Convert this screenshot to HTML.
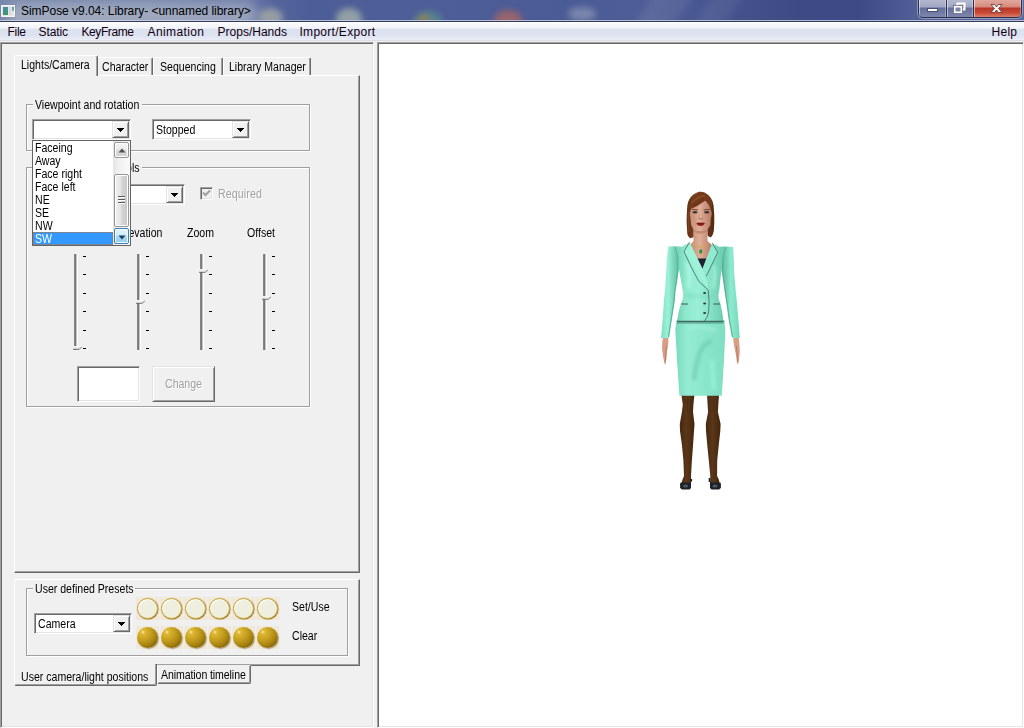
<!DOCTYPE html>
<html>
<head>
<meta charset="utf-8">
<title>SimPose v9.04: Library- &lt;unnamed library&gt;</title>
<style>
html,body{margin:0;padding:0;}
body{width:1024px;height:728px;position:relative;overflow:hidden;background:#f0f0f0;font-family:"Liberation Sans",sans-serif;font-size:12px;color:#000;}
.abs{position:absolute;}
#titlebar{left:0;top:0;width:1024px;height:22px;overflow:hidden;
 background:linear-gradient(90deg,#7686ac 0px,#7484ab 150px,#6a7aa8 245px,#55659c 275px,#4d5d97 310px,#4e5e98 420px,#4b5b95 560px,#4e5d96 650px,#46548e 720px,#3d4a84 800px,#3e4a85 860px,#525e96 915px,#5a669c 1024px);}
#titlebar .blob{position:absolute;border-radius:50%;filter:blur(3px);}
#titletext{left:21px;top:4px;font-size:12px;white-space:nowrap;color:#000;letter-spacing:-0.04px;}
#menubar{left:0;top:22px;width:1024px;height:19px;background:linear-gradient(#fdfdfe 0,#f1f3f9 6px,#dde2f0 7.500px,#dde2f0 13px,#e6eaf4 17px,#eef0f7 18px,#c9cdd9 19px);}
.mi{position:absolute;top:25px;font-size:12px;white-space:nowrap;color:#100010;letter-spacing:0.22px;}
.t{position:absolute;white-space:nowrap;font-size:12px;line-height:14px;transform:scaleX(.88);transform-origin:0 0;}
.gray{color:#a0a0a0;text-shadow:1px 1px 0 #fff;}
.gb{position:absolute;border:1px solid #a0a0a0;box-shadow:1px 1px 0 #fff, inset 1px 1px 0 #fff;box-sizing:border-box;}
.gbl{position:absolute;background:#f0f0f0;height:14px;}
.sunk{position:absolute;box-sizing:border-box;background:#fff;border:1px solid;border-color:#a0a0a0 #fff #fff #a0a0a0;box-shadow:inset 1px 1px 0 #696969, inset -1px -1px 0 #e3e3e3;}
.btn{position:absolute;box-sizing:border-box;background:#f0f0f0;border:1px solid;border-color:#e3e3e3 #696969 #696969 #e3e3e3;box-shadow:inset 1px 1px 0 #fff, inset -1px -1px 0 #a0a0a0;}
.arr{position:absolute;width:0;height:0;border-left:4px solid transparent;border-right:4px solid transparent;border-top:4px solid #000;}
.track{position:absolute;width:3px;height:96px;background:linear-gradient(90deg,#a0a0a0 0,#696969 1px,#8a8a8a 2px,#fff 3px);box-shadow:1px 0 0 #fff;}
.tick{position:absolute;width:3px;height:1px;background:#000;}
.tabu{box-sizing:border-box;border:1px solid;border-color:#fff #696969 transparent #fff;border-bottom:none;border-radius:2px 2px 0 0;box-shadow:inset -1px 0 0 #a0a0a0;}
.thumb{position:absolute;width:9px;height:4px;}
</style>
</head>
<body>

<!-- ===== title bar ===== -->
<div id="titlebar" class="abs">
  <div class="blob" style="left:6px;top:3px;width:252px;height:24px;background:#e0e0dc;opacity:.4;filter:blur(6px);border-radius:12px"></div>
  <div class="blob" style="left:259px;top:8px;width:24px;height:20px;background:#c8c8a8;opacity:.55"></div>
  <div class="blob" style="left:336px;top:8px;width:26px;height:22px;background:#c0ccb0;opacity:.6"></div>
  <div class="blob" style="left:414px;top:11px;width:28px;height:20px;background:#5a9a8a;opacity:.65"></div>
  <div class="blob" style="left:418px;top:15px;width:12px;height:10px;background:#c07830;opacity:.6"></div>
  <div class="blob" style="left:494px;top:10px;width:28px;height:22px;background:#b8685c;opacity:.7"></div>
  <div class="blob" style="left:568px;top:7px;width:28px;height:14px;background:#98a2bc;opacity:.6"></div>
  <div class="abs" style="left:640px;top:-20px;width:40px;height:70px;background:#fff;opacity:.07;transform:skewX(-35deg);filter:blur(4px)"></div>
  <div class="abs" style="left:700px;top:-20px;width:30px;height:70px;background:#fff;opacity:.06;transform:skewX(-35deg);filter:blur(4px)"></div>
  <div class="abs" style="left:0;top:20px;width:1024px;height:1px;background:#d4daea;opacity:.75"></div>
</div>
<div class="abs" style="left:0;top:21px;width:1024px;height:1px;background:#343c5c;"></div>
<!-- app icon -->
<div class="abs" style="left:1px;top:5px;width:14px;height:12px;background:#e4e6e6;border:1px solid #f4f6f8;box-sizing:border-box;box-shadow:0 0 1px #667;">
  <div class="abs" style="left:1px;top:1px;width:5px;height:8px;background:linear-gradient(#4a8aa8,#3c9a6c);"></div>
  <div class="abs" style="left:7px;top:1px;width:2px;height:8px;background:#d8dada;"></div>
  <div class="abs" style="left:10px;top:1px;width:2px;height:4px;background:linear-gradient(#5a96c8,#7ab888);"></div>
</div>
<div id="titletext" class="abs">SimPose v9.04: Library- &lt;unnamed library&gt;</div>

<!-- window buttons -->
<div class="abs" style="left:918px;top:-2px;width:104px;height:20px;border:1px solid #2a3050;border-radius:0 0 5px 5px;box-sizing:border-box;overflow:hidden;box-shadow:0 0 0 1px rgba(255,255,255,.35);">
  <div class="abs" style="left:0;top:0;width:27px;height:18px;background:linear-gradient(#b6bbd0 0,#a0a6c2 8px,#666f9b 9px,#7d87ae 18px);box-shadow:inset 1px 0 0 rgba(255,255,255,.5), inset -1px 0 0 rgba(255,255,255,.3);"></div>
  <div class="abs" style="left:27px;top:0;width:1px;height:18px;background:#2a3050;"></div>
  <div class="abs" style="left:28px;top:0;width:26px;height:18px;background:linear-gradient(#b6bbd0 0,#a0a6c2 8px,#666f9b 9px,#7d87ae 18px);box-shadow:inset 1px 0 0 rgba(255,255,255,.5), inset -1px 0 0 rgba(255,255,255,.3);"></div>
  <div class="abs" style="left:54px;top:0;width:1px;height:18px;background:#2a3050;"></div>
  <div class="abs" style="left:55px;top:0;width:47px;height:18px;background:linear-gradient(#e2aca2 0,#d68a7a 8px,#b8362a 9px,#c84a36 14px,#d8806a 18px);box-shadow:inset 1px 0 0 rgba(255,255,255,.5), inset -1px 0 0 rgba(255,255,255,.3);"></div>
</div>
<svg class="abs" style="left:918px;top:0" width="104" height="18" viewBox="0 0 104 18">
  <rect x="9.5" y="8.500" width="10" height="3" fill="#fff" stroke="#4a506a" stroke-width="1"/>
  <rect x="39.500" y="3.500" width="7" height="6" fill="#9097b6" stroke="#fff" stroke-width="2"/>
  <rect x="36.500" y="6.500" width="7" height="6" fill="#7c86ad" stroke="#fff" stroke-width="2"/>
  <rect x="35.500" y="5.500" width="9" height="8" fill="none" stroke="#4a506a" stroke-width=".6"/>
  <path d="M73 4.500 L76.500 4.500 L78.500 7 L80.500 4.500 L84 4.500 L80.500 8.500 L84 12.500 L80.500 12.500 L78.500 10 L76.500 12.500 L73 12.500 L76.500 8.500 Z" fill="#fff" stroke="#5a3030" stroke-width=".8"/>
</svg>

<!-- ===== menu bar ===== -->
<div id="menubar" class="abs"></div>
<div class="mi" style="left:7.5px;letter-spacing:-0.28px">File</div>
<div class="mi" style="left:38.5px;letter-spacing:-0.1px">Static</div>
<div class="mi" style="left:81.5px;letter-spacing:-0.41px">KeyFrame</div>
<div class="mi" style="left:147.5px;letter-spacing:0.39px">Animation</div>
<div class="mi" style="left:217.5px;letter-spacing:0.01px">Props/Hands</div>
<div class="mi" style="left:299.5px;letter-spacing:0.29px">Import/Export</div>
<div class="mi" style="left:991.5px;letter-spacing:0.27px">Help</div>

<!-- ===== frames ===== -->
<div class="abs" style="left:0;top:41px;width:1024px;height:1px;background:#f0f0f0;"></div>
<!-- left panel -->
<div class="abs" id="leftpanel" style="left:0;top:42px;width:374px;height:686px;box-sizing:border-box;background:#f0f0f0;border:1px solid;border-color:#a0a0a0 #fff #fff #a0a0a0;box-shadow:inset 1px 1px 0 #696969, inset -1px -1px 0 #e3e3e3;"></div>
<!-- ===== upper tab control ===== -->
<!-- tab page -->
<div class="abs" style="left:14px;top:75px;width:346px;height:498px;box-sizing:border-box;border:1px solid;border-color:#fff #696969 #696969 #fff;box-shadow:inset -1px -1px 0 #a0a0a0;"></div>
<!-- unselected tabs -->
<div class="abs tabu" style="left:97px;top:57px;width:56px;height:18px;"></div>
<div class="abs tabu" style="left:153px;top:57px;width:70px;height:18px;"></div>
<div class="abs tabu" style="left:223px;top:57px;width:88px;height:18px;"></div>
<!-- selected tab -->
<div class="abs" style="left:14px;top:55px;width:84px;height:21px;box-sizing:border-box;background:#f0f0f0;border:1px solid;border-color:#fff #696969 #f0f0f0 #fff;border-bottom:none;border-radius:2px 2px 0 0;box-shadow:inset -1px 0 0 #a0a0a0;"></div>
<div class="t" style="left:21px;top:58px;">Lights/Camera</div>
<div class="t" style="left:102px;top:60px;">Character</div>
<div class="t" style="left:160px;top:60px;">Sequencing</div>
<div class="t" style="left:229px;top:60px;">Library Manager</div>

<!-- group: Viewpoint and rotation -->
<div class="gb" style="left:26px;top:104px;width:284px;height:47px;"></div>
<div class="gbl" style="left:33px;top:98px;width:109px;"></div>
<div class="t" style="left:35px;top:98px;">Viewpoint and rotation</div>

<!-- group: Lights controls (partially hidden) -->
<div class="gb" style="left:26px;top:167px;width:284px;height:240px;"></div>
<div class="gbl" style="left:33px;top:161px;width:109px;"></div>
<div class="t" style="left:19px;top:161px;width:137px;text-align:right;">Lighting controls</div>

<!-- combo 2 (Stopped) -->
<div class="sunk" style="left:152px;top:119px;width:99px;height:21px;"></div>
<div class="btn" style="left:232px;top:121px;width:17px;height:17px;"></div>
<svg class="abs" style="left:237px;top:128px" width="7" height="4" viewBox="0 0 7 4" shape-rendering="crispEdges"><path d="M0 0h7v1h-7z M1 1h5v1h-5z M2 2h3v1h-3z M3 3h1v1h-1z" fill="#000"/></svg>
<div class="t" style="left:156px;top:123px;">Stopped</div>

<!-- lights combo (partially hidden) -->
<div class="sunk" style="left:86px;top:184px;width:99px;height:21px;"></div>
<div class="btn" style="left:166px;top:186px;width:17px;height:17px;"></div>
<svg class="abs" style="left:171px;top:193px" width="7" height="4" viewBox="0 0 7 4" shape-rendering="crispEdges"><path d="M0 0h7v1h-7z M1 1h5v1h-5z M2 2h3v1h-3z M3 3h1v1h-1z" fill="#000"/></svg>

<!-- Required checkbox -->
<div class="sunk" style="left:200px;top:187px;width:13px;height:13px;background:#f0f0f0;"></div>
<svg class="abs" style="left:202px;top:189px" width="9" height="9" viewBox="0 0 9 9"><path d="M1 3.500 L3.500 6 L8 1.500" fill="none" stroke="#a0a0a0" stroke-width="2"/></svg>
<div class="t gray" style="left:218px;top:187px;letter-spacing:.15px">Required</div>

<!-- slider labels -->
<div class="t" style="left:62px;top:226px;">Rotation</div>
<div class="t" style="left:118.500px;top:226px;">Elevation</div>
<div class="t" style="left:187px;top:226px;">Zoom</div>
<div class="t" style="left:247px;top:226px;">Offset</div>
<div class="track" style="left:74px;top:254px;"></div>
<div class="tick" style="left:83px;top:256px;"></div>
<div class="tick" style="left:83px;top:274px;"></div>
<div class="tick" style="left:83px;top:293px;"></div>
<div class="tick" style="left:83px;top:311px;"></div>
<div class="tick" style="left:83px;top:330px;"></div>
<div class="tick" style="left:83px;top:348px;"></div>
<svg class="thumb" style="left:73px;top:346px" width="10" height="4" viewBox="0 0 10 4"><path d="M0 0 H10 L7 3 H0 Z" fill="#e8e8e8"/><path d="M0 0.500 H9" stroke="#fff" stroke-width="1"/><path d="M0 3.500 H7 L10 0.500" fill="none" stroke="#696969" stroke-width="1"/></svg>
<div class="track" style="left:137px;top:254px;"></div>
<div class="tick" style="left:146px;top:256px;"></div>
<div class="tick" style="left:146px;top:274px;"></div>
<div class="tick" style="left:146px;top:293px;"></div>
<div class="tick" style="left:146px;top:311px;"></div>
<div class="tick" style="left:146px;top:330px;"></div>
<div class="tick" style="left:146px;top:348px;"></div>
<svg class="thumb" style="left:136px;top:300px" width="10" height="4" viewBox="0 0 10 4"><path d="M0 0 H10 L7 3 H0 Z" fill="#e8e8e8"/><path d="M0 0.500 H9" stroke="#fff" stroke-width="1"/><path d="M0 3.500 H7 L10 0.500" fill="none" stroke="#696969" stroke-width="1"/></svg>
<div class="track" style="left:200px;top:254px;"></div>
<div class="tick" style="left:209px;top:256px;"></div>
<div class="tick" style="left:209px;top:274px;"></div>
<div class="tick" style="left:209px;top:293px;"></div>
<div class="tick" style="left:209px;top:311px;"></div>
<div class="tick" style="left:209px;top:330px;"></div>
<div class="tick" style="left:209px;top:348px;"></div>
<svg class="thumb" style="left:199px;top:269px" width="10" height="4" viewBox="0 0 10 4"><path d="M0 0 H10 L7 3 H0 Z" fill="#e8e8e8"/><path d="M0 0.500 H9" stroke="#fff" stroke-width="1"/><path d="M0 3.500 H7 L10 0.500" fill="none" stroke="#696969" stroke-width="1"/></svg>
<div class="track" style="left:263px;top:254px;"></div>
<div class="tick" style="left:272px;top:256px;"></div>
<div class="tick" style="left:272px;top:274px;"></div>
<div class="tick" style="left:272px;top:293px;"></div>
<div class="tick" style="left:272px;top:311px;"></div>
<div class="tick" style="left:272px;top:330px;"></div>
<div class="tick" style="left:272px;top:348px;"></div>
<svg class="thumb" style="left:262px;top:296px" width="10" height="4" viewBox="0 0 10 4"><path d="M0 0 H10 L7 3 H0 Z" fill="#e8e8e8"/><path d="M0 0.500 H9" stroke="#fff" stroke-width="1"/><path d="M0 3.500 H7 L10 0.500" fill="none" stroke="#696969" stroke-width="1"/></svg>

<!-- edit + Change button -->
<div class="sunk" style="left:77px;top:366px;width:63px;height:36px;"></div>
<div class="btn" style="left:152px;top:366px;width:63px;height:36px;"></div>
<div class="t gray" style="left:165px;top:377px;">Change</div>

<!-- combo 1 (open) -->
<div class="sunk" style="left:32px;top:119px;width:99px;height:21px;"></div>
<div class="btn" style="left:112px;top:121px;width:17px;height:17px;"></div>
<svg class="abs" style="left:117px;top:128px" width="7" height="4" viewBox="0 0 7 4" shape-rendering="crispEdges"><path d="M0 0h7v1h-7z M1 1h5v1h-5z M2 2h3v1h-3z M3 3h1v1h-1z" fill="#000"/></svg>
<!-- dropdown list -->
<div class="abs" style="left:32px;top:140px;width:99px;height:106px;box-sizing:border-box;background:#fff;border:1px solid #646464;"></div>
<div class="t li" style="left:35px;top:141px;">Faceing</div>
<div class="t li" style="left:35px;top:154px;">Away</div>
<div class="t li" style="left:35px;top:167px;">Face right</div>
<div class="t li" style="left:35px;top:180px;">Face left</div>
<div class="t li" style="left:35px;top:193px;">NE</div>
<div class="t li" style="left:35px;top:206px;">SE</div>
<div class="t li" style="left:35px;top:219px;">NW</div>
<div class="abs" style="left:33px;top:232px;width:80px;height:13px;box-sizing:border-box;background:#3399ff;border:1px dotted #c07030;"></div>
<div class="t li" style="left:35px;top:232px;color:#fff;">SW</div>
<!-- scrollbar -->
<div class="abs" style="left:113px;top:141px;width:17px;height:104px;background:linear-gradient(90deg,#e4e4e4,#f0f0f0 30%,#fafafa);"></div>
<div class="abs" style="left:114px;top:142px;width:15px;height:16px;box-sizing:border-box;border:1px solid #979797;border-radius:2px;background:linear-gradient(#f6f6f6,#ececec 45%,#dcdcdc 50%,#cfcfcf);box-shadow:inset 0 0 0 1px #fff;"></div>
<svg class="abs" style="left:118px;top:148px" width="8" height="5" viewBox="0 0 8 5"><path d="M0.500 4.500 L4 0.500 L7.500 4.500 Z" fill="#505050"/></svg>
<div class="abs" style="left:114px;top:174px;width:15px;height:53px;box-sizing:border-box;border:1px solid #979797;border-radius:2px;background:linear-gradient(90deg,#f3f3f3,#e2e2e2 45%,#d4d4d4 55%,#c6c6c6);box-shadow:inset 0 0 0 1px #fff;"></div>
<div class="abs" style="left:118px;top:196px;width:7px;height:1px;background:#5a5a5a;box-shadow:0 1px 0 #fff,0 3px 0 #5a5a5a,0 4px 0 #fff,0 6px 0 #5a5a5a,0 7px 0 #fff;"></div>
<div class="abs" style="left:114px;top:228px;width:15px;height:16px;box-sizing:border-box;border:1px solid #3c7fb1;border-radius:2px;background:linear-gradient(#e3f4fc,#d0ecfa 45%,#a8d9f4 50%,#94cdf0);box-shadow:inset 0 0 0 1px #f4fbfe;"></div>
<svg class="abs" style="left:118px;top:235px" width="8" height="5" viewBox="0 0 8 5"><path d="M0.500 0.500 H7.500 L4 4.500 Z" fill="#1c3f60"/></svg>

<!-- ===== lower frame ===== -->
<div class="abs" style="left:14px;top:579px;width:346px;height:87px;box-sizing:border-box;border:1px solid;border-color:#fff #696969 #696969 #fff;box-shadow:inset -1px -1px 0 #a0a0a0;"></div>
<div class="gb" style="left:26px;top:588px;width:322px;height:68px;"></div>
<div class="gbl" style="left:33px;top:582px;width:102px;"></div>
<div class="t" style="left:35px;top:582px;">User defined Presets</div>
<div class="sunk" style="left:34px;top:613px;width:98px;height:21px;"></div>
<div class="btn" style="left:113px;top:615px;width:17px;height:17px;"></div>
<svg class="abs" style="left:118px;top:622px" width="7" height="4" viewBox="0 0 7 4" shape-rendering="crispEdges"><path d="M0 0h7v1h-7z M1 1h5v1h-5z M2 2h3v1h-3z M3 3h1v1h-1z" fill="#000"/></svg>
<div class="t" style="left:38px;top:617px;">Camera</div>
<div class="t" style="left:292px;top:600px;">Set/Use</div>
<div class="t" style="left:292px;top:629px;">Clear</div>

<div class="abs" style="left:136px;top:597px;width:24px;height:23px;background:#f0e9d9;box-shadow:inset -1px 0 0 #f4efe4;"></div>
<div class="abs" style="left:137px;top:597.500px;width:21px;height:21px;box-sizing:border-box;border-radius:50%;background:#efefdf;border:1px solid #cfa638;box-shadow:inset 1px 1px 0 #fff, 0.500px 0.500px 1px #8a6a10;"></div>
<div class="abs" style="left:136px;top:626px;width:24px;height:23px;background:#f0e9d9;box-shadow:inset -1px 0 0 #f4efe4;"></div>
<div class="abs" style="left:137px;top:626.500px;width:21px;height:21px;border-radius:50%;background:radial-gradient(circle at 28% 24%,#f6e090 0,#dcb432 12%,#c9a222 34%,#ad8812 58%,#7a5a06 88%,#9a7a18 100%);box-shadow:1px 1px 1px rgba(120,90,20,.5);"></div>
<div class="abs" style="left:160px;top:597px;width:24px;height:23px;background:#f0e9d9;box-shadow:inset -1px 0 0 #f4efe4;"></div>
<div class="abs" style="left:161px;top:597.500px;width:21px;height:21px;box-sizing:border-box;border-radius:50%;background:#efefdf;border:1px solid #cfa638;box-shadow:inset 1px 1px 0 #fff, 0.500px 0.500px 1px #8a6a10;"></div>
<div class="abs" style="left:160px;top:626px;width:24px;height:23px;background:#f0e9d9;box-shadow:inset -1px 0 0 #f4efe4;"></div>
<div class="abs" style="left:161px;top:626.500px;width:21px;height:21px;border-radius:50%;background:radial-gradient(circle at 28% 24%,#f6e090 0,#dcb432 12%,#c9a222 34%,#ad8812 58%,#7a5a06 88%,#9a7a18 100%);box-shadow:1px 1px 1px rgba(120,90,20,.5);"></div>
<div class="abs" style="left:184px;top:597px;width:24px;height:23px;background:#f0e9d9;box-shadow:inset -1px 0 0 #f4efe4;"></div>
<div class="abs" style="left:185px;top:597.500px;width:21px;height:21px;box-sizing:border-box;border-radius:50%;background:#efefdf;border:1px solid #cfa638;box-shadow:inset 1px 1px 0 #fff, 0.500px 0.500px 1px #8a6a10;"></div>
<div class="abs" style="left:184px;top:626px;width:24px;height:23px;background:#f0e9d9;box-shadow:inset -1px 0 0 #f4efe4;"></div>
<div class="abs" style="left:185px;top:626.500px;width:21px;height:21px;border-radius:50%;background:radial-gradient(circle at 28% 24%,#f6e090 0,#dcb432 12%,#c9a222 34%,#ad8812 58%,#7a5a06 88%,#9a7a18 100%);box-shadow:1px 1px 1px rgba(120,90,20,.5);"></div>
<div class="abs" style="left:208px;top:597px;width:24px;height:23px;background:#f0e9d9;box-shadow:inset -1px 0 0 #f4efe4;"></div>
<div class="abs" style="left:209px;top:597.500px;width:21px;height:21px;box-sizing:border-box;border-radius:50%;background:#efefdf;border:1px solid #cfa638;box-shadow:inset 1px 1px 0 #fff, 0.500px 0.500px 1px #8a6a10;"></div>
<div class="abs" style="left:208px;top:626px;width:24px;height:23px;background:#f0e9d9;box-shadow:inset -1px 0 0 #f4efe4;"></div>
<div class="abs" style="left:209px;top:626.500px;width:21px;height:21px;border-radius:50%;background:radial-gradient(circle at 28% 24%,#f6e090 0,#dcb432 12%,#c9a222 34%,#ad8812 58%,#7a5a06 88%,#9a7a18 100%);box-shadow:1px 1px 1px rgba(120,90,20,.5);"></div>
<div class="abs" style="left:232px;top:597px;width:24px;height:23px;background:#f0e9d9;box-shadow:inset -1px 0 0 #f4efe4;"></div>
<div class="abs" style="left:233px;top:597.500px;width:21px;height:21px;box-sizing:border-box;border-radius:50%;background:#efefdf;border:1px solid #cfa638;box-shadow:inset 1px 1px 0 #fff, 0.500px 0.500px 1px #8a6a10;"></div>
<div class="abs" style="left:232px;top:626px;width:24px;height:23px;background:#f0e9d9;box-shadow:inset -1px 0 0 #f4efe4;"></div>
<div class="abs" style="left:233px;top:626.500px;width:21px;height:21px;border-radius:50%;background:radial-gradient(circle at 28% 24%,#f6e090 0,#dcb432 12%,#c9a222 34%,#ad8812 58%,#7a5a06 88%,#9a7a18 100%);box-shadow:1px 1px 1px rgba(120,90,20,.5);"></div>
<div class="abs" style="left:256px;top:597px;width:24px;height:23px;background:#f0e9d9;box-shadow:inset -1px 0 0 #f4efe4;"></div>
<div class="abs" style="left:257px;top:597.500px;width:21px;height:21px;box-sizing:border-box;border-radius:50%;background:#efefdf;border:1px solid #cfa638;box-shadow:inset 1px 1px 0 #fff, 0.500px 0.500px 1px #8a6a10;"></div>
<div class="abs" style="left:256px;top:626px;width:24px;height:23px;background:#f0e9d9;box-shadow:inset -1px 0 0 #f4efe4;"></div>
<div class="abs" style="left:257px;top:626.500px;width:21px;height:21px;border-radius:50%;background:radial-gradient(circle at 28% 24%,#f6e090 0,#dcb432 12%,#c9a222 34%,#ad8812 58%,#7a5a06 88%,#9a7a18 100%);box-shadow:1px 1px 1px rgba(120,90,20,.5);"></div>
<!-- lower tabs -->
<div class="abs" style="left:157px;top:665px;width:94px;height:19px;box-sizing:border-box;border:1px solid;border-color:#f0f0f0 #696969 #696969 #fff;border-radius:0 0 2px 2px;box-shadow:inset -1px -1px 0 #a0a0a0;"></div>
<div class="abs" style="left:14px;top:664px;width:143px;height:22px;box-sizing:border-box;background:#f0f0f0;border:1px solid;border-color:#f0f0f0 #696969 #696969 #fff;border-top:none;border-radius:0 0 2px 2px;box-shadow:inset -1px -1px 0 #a0a0a0;"></div>
<div class="t" style="left:21px;top:670px;">User camera/light positions</div>
<div class="t" style="left:161px;top:668px;letter-spacing:-0.1px">Animation timeline</div>

<!-- viewport -->
<div class="abs" id="viewport" style="left:377px;top:42px;width:647px;height:686px;box-sizing:border-box;background:#fff;border:1px solid;border-color:#a0a0a0 #fff #fff #a0a0a0;box-shadow:inset 1px 1px 0 #696969, inset -1px -1px 0 #e3e3e3;"></div>

<!-- ===== figure ===== -->
<svg class="abs" style="left:640px;top:180px" width="120" height="320" viewBox="640 180 120 320">
<defs>
  <filter id="soft" x="-5%" y="-5%" width="110%" height="110%"><feGaussianBlur stdDeviation="0.5"/></filter>
  <filter id="soft2" x="-20%" y="-20%" width="140%" height="140%"><feGaussianBlur stdDeviation="1.6"/></filter>
  <linearGradient id="jk" x1="0" x2="1" y1="0" y2="0">
    <stop offset="0" stop-color="#6cceb0"/><stop offset=".2" stop-color="#8ee8cc"/><stop offset=".45" stop-color="#9af0d6"/><stop offset=".7" stop-color="#86e2c6"/><stop offset="1" stop-color="#66c6aa"/>
  </linearGradient>
  <linearGradient id="armL" x1="0" x2="1" y1="0" y2="0">
    <stop offset="0" stop-color="#7ee0c2"/><stop offset=".4" stop-color="#9cf2d8"/><stop offset="1" stop-color="#5ebea2"/>
  </linearGradient>
  <linearGradient id="armR" x1="0" x2="1" y1="0" y2="0">
    <stop offset="0" stop-color="#58b89c"/><stop offset=".5" stop-color="#8eead0"/><stop offset="1" stop-color="#74d8ba"/>
  </linearGradient>
  <linearGradient id="sk" x1="0" x2="1" y1="0" y2="0">
    <stop offset="0" stop-color="#7adabe"/><stop offset=".25" stop-color="#94ecd2"/><stop offset=".6" stop-color="#8ae6ca"/><stop offset="1" stop-color="#80dec2"/>
  </linearGradient>
  <linearGradient id="leg" x1="0" x2="1" y1="0" y2="0">
    <stop offset="0" stop-color="#46280f"/><stop offset=".45" stop-color="#5a3819"/><stop offset="1" stop-color="#42240c"/>
  </linearGradient>
  <linearGradient id="hair" x1="0" x2="1" y1="0" y2="0">
    <stop offset="0" stop-color="#623014"/><stop offset=".35" stop-color="#7e4222"/><stop offset=".7" stop-color="#70381a"/><stop offset="1" stop-color="#54280e"/>
  </linearGradient>
  <linearGradient id="skin" x1="0" x2="1" y1="0" y2="0">
    <stop offset="0" stop-color="#c48c76"/><stop offset=".45" stop-color="#e0ae98"/><stop offset="1" stop-color="#b47a64"/>
  </linearGradient>
</defs>
<g filter="url(#soft)">
  <!-- legs -->
  <path d="M681.300 394 L694.500 394 L693.400 404.700 L693 412 L694.500 424 L694 431 L693 445.500 L691.900 460.600 L691 476 L691 483 L681.500 483 L682.500 479.500 L684 476 L683.400 460.600 L682 445.500 L680 431 L679.800 424 L681.900 412 L682.800 404.700 Z" fill="url(#leg)"/>
  <path d="M707 394 L719.100 394 L718.300 404.700 L717.900 412 L720.600 424 L720.300 431 L718.700 445.500 L717.200 460.600 L717.100 476 L718.800 479.500 L719.600 483 L710 483 L710.300 476 L708.800 460.600 L707.300 445.500 L706 431 L705.800 424 L708.100 412 L707.600 404.700 Z" fill="url(#leg)"/>
  <path d="M687.500 398 L687.500 412" stroke="#3c200c" stroke-width="1.500" opacity=".35"/>
  <path d="M713.500 398 L713.500 412" stroke="#3c200c" stroke-width="1.500" opacity=".35"/>
  <!-- shoes -->
  <path d="M680.100 484 Q680.100 482.600 681.500 482.600 L691 482.600 L691 488 L689.500 489.600 L682 489.600 L680.100 488 Z" fill="#1e222a"/>
  <path d="M710 482.600 L719.500 482.600 Q720.900 482.600 720.900 484 L720.900 488 L719 489.600 L711.500 489.600 L710 488 Z" fill="#1e222a"/>
  <rect x="690.500" y="479" width="1.600" height="2.600" fill="#1c2230"/>
  <rect x="708.700" y="478" width="1.500" height="4" fill="#1c2230"/>
  <ellipse cx="685.500" cy="486" rx="2.600" ry="1.500" fill="#56686c" opacity=".8"/>
  <ellipse cx="715" cy="486" rx="2.600" ry="1.500" fill="#56686c" opacity=".8"/>
  <!-- hands -->
  <path d="M663 337 L668.400 337 L668.300 344 L667 351 L666.500 358 L665.500 364.500 L664.500 364 L663.200 357 L662 349 L662.300 342 Z" fill="#d89e86"/>
  <path d="M733.200 337 L738.500 337 L739.400 344 L739.800 352 L739 360 L738 364.500 L737 363 L736 355 L734.500 348 L733.500 342 Z" fill="#d89e86"/>
  <path d="M666.500 346 L665.200 362" stroke="#b87864" stroke-width=".9"/>
  <path d="M736.500 346 L737.800 362" stroke="#b87864" stroke-width=".9"/>
  <!-- skirt -->
  <path d="M676.500 320 L724.500 320 L725.300 332 L724 360 L721.800 395.800 L679.400 395.800 L677 360 L675.300 330 Z" fill="url(#sk)"/>
  <g filter="url(#soft2)" opacity=".5">
    <path d="M712 341 Q704 343 700 352 Q696 364 694 380" stroke="#68c4aa" stroke-width="5" fill="none"/>
    <path d="M690 328 Q702 326 716 330" stroke="#a8f6e0" stroke-width="4" fill="none"/>
    <path d="M712 360 L714 390" stroke="#a2f4dc" stroke-width="5" fill="none"/>
  </g>
  <!-- neck -->
  <path d="M693.500 224 L707.300 224 L707.500 241 L712 245 L702.500 270 L690 245 L693.500 241 Z" fill="url(#skin)"/>
  <path d="M693.500 231 Q700.500 237 707.300 231 L707.300 228 L693.500 228 Z" fill="#b07660" opacity=".6"/>
  <!-- dark shirt -->
  <path d="M696 258.500 L707 258.500 L702.500 270 Z" fill="#20242e"/>
  <!-- arms -->
  <path d="M668.200 246.500 L675 246.300 L678.500 256 L678.500 268 L676.800 281 L675 292 L674.500 300 L671.300 321 L668.800 338 L661 338 L662.500 321 L664 300 L665.100 290 L666 275 L667 257 Z" fill="url(#armL)"/>
  <path d="M733 247 L726 246.500 L722.500 256 L721.800 269 L723 277 L724.700 289.500 L726.300 300 L729.300 321 L732.300 338 L739.800 338 L738.500 321 L736.700 300 L735.600 289.500 L734.200 273 L733.800 260 Z" fill="url(#armR)"/>
  <path d="M675 247 L678.300 256 L678.300 268 L676.600 281 L674.800 292 L674.300 300 L671 321 L668.500 337" stroke="#4aa48a" stroke-width="1.300" fill="none" opacity=".75"/>
  <path d="M726 247 L722.700 256 L722 269 L723.200 277 L724.900 289.500 L726.500 300 L729.500 321 L732.500 337" stroke="#4aa48a" stroke-width="1.300" fill="none" opacity=".75"/>
  <!-- jacket torso -->
  <path d="M675 246.300 L682 246.800 L689.500 242.300 L702.500 269 L712.400 243.300 L719 246.800 L726 246.500 L722.500 256 L721.800 269 L720.600 277 L719.400 289.500 L718.400 295 L718.700 299 L720.500 304 L722.200 312 L723.500 321.500 L677 321.500 L678.600 312 L680.900 304 L683 298 L683.200 293 L681.400 283 L679.700 273 L678.500 268 L678.500 256 Z" fill="url(#jk)"/>
  <g filter="url(#soft2)" opacity=".8">
    <path d="M687 262 Q691 272 689 288" stroke="#b0f8e4" stroke-width="4" fill="none"/>
    <path d="M714 266 Q716 276 713 288" stroke="#a8f4de" stroke-width="3" fill="none"/>
    <path d="M686 296 L716 296" stroke="#78d4b8" stroke-width="3" fill="none" opacity=".6"/>
  </g>
  <!-- lapel shapes (lighter) -->
  <path d="M689.500 242.300 L684 251.500 L708.200 290 L707 281 L702.500 269 Z" fill="#9ef2d8"/>
  <path d="M712.400 243.300 L717.700 252.400 L706.200 276.300 L702.500 269 Z" fill="#90ead0"/>
  <!-- lapel outlines -->
  <path d="M689.500 242.300 L684 251.500 L691.300 267.200 L698.700 281.200 L708.200 290 Q709.800 303 708.600 312 Q707.700 318 704.200 321.300" stroke="#4e7670" stroke-width=".9" fill="none"/>
  <path d="M712.400 243.300 L717.700 252.400 L706.200 276.300" stroke="#4e7670" stroke-width=".9" fill="none"/>
  <!-- bottom line, pockets -->
  <path d="M677 323 L723.500 323" stroke="#5aa894" stroke-width="2" opacity=".6"/>
  <path d="M677 321.500 L723.500 321.500" stroke="#40685e" stroke-width="1.600"/>
  <path d="M681.200 304 L688 304" stroke="#46645e" stroke-width="1.100"/>
  <path d="M713.400 304 L720 304" stroke="#46645e" stroke-width="1.100"/>
  <!-- buttons -->
  <ellipse cx="704.600" cy="293.100" rx="1.500" ry="1" fill="#2e3e42"/>
  <ellipse cx="704.600" cy="303.400" rx="1.500" ry="1" fill="#2e3e42"/>
  <ellipse cx="704.600" cy="313" rx="1.500" ry="1" fill="#2e3e42"/>
  <!-- necklace -->
  <path d="M692.500 243.500 Q700 251 708.500 243.500" stroke="#d4a850" stroke-width="1" fill="none"/>
  <ellipse cx="700.700" cy="251.500" rx="1.500" ry="2.200" fill="#1a9c30"/>
  <!-- hair back -->
  <path d="M699.200 191.800 Q702 191.300 704.600 192.500 Q708.500 194.500 710.800 198 Q713 201 713.500 205 L714.200 214 L714.300 222 L713.800 231 Q713 235.500 710.800 237.400 L707.700 236 L707.300 226 L693.500 226 L693.500 237.200 L690 238.200 Q687.800 236.500 687.300 234 L686.600 222 L686.800 214 L687.300 205.700 Q687.800 202 689.200 199.500 Q692 194 699.200 191.800 Z" fill="url(#hair)"/>
  <!-- face -->
  <path d="M691.500 207 Q697 204 705.400 200.500 Q710 204 710.800 209.500 L711.800 213.500 L710.600 220 L710.400 225 Q708.500 229 705.400 231 L695.400 231 Q692.500 229 691.200 225 L690.600 220 L689.800 213.500 Z" fill="url(#skin)"/>
  <path d="M693 214 Q694.500 220 696 226" stroke="#c89078" stroke-width="1.500" fill="none" opacity=".5"/>
  <!-- fringe -->
  <path d="M689.500 209.500 Q690 199 699.200 192.500 Q708 193 712.500 203 L711 210 Q709 204 705.400 200.500 Q698.500 206 689.500 209.500 Z" fill="#723a1a"/>
  <path d="M691.500 203 Q697 197 705 195.500" stroke="#98562e" stroke-width="1.300" fill="none" opacity=".7"/>
  <path d="M693 206 Q699 202.500 704 198.500" stroke="#5e2c10" stroke-width="1" fill="none" opacity=".7"/>
  <path d="M688.300 212 L688.300 232" stroke="#9a5630" stroke-width="1" fill="none" opacity=".6"/>
  <path d="M712.800 212 L712.500 232" stroke="#5e2c10" stroke-width="1" fill="none" opacity=".5"/>
  <!-- eyes / brows -->
  <path d="M692 209.400 L698 209.900" stroke="#6a3a20" stroke-width=".9"/>
  <path d="M703.500 209.900 L709.800 209.400" stroke="#6a3a20" stroke-width=".9"/>
  <ellipse cx="695" cy="212.200" rx="2.600" ry="1.200" fill="#4a4046"/>
  <ellipse cx="706.700" cy="212.200" rx="2.700" ry="1.200" fill="#4a4046"/>
  <circle cx="695" cy="212.200" r=".8" fill="#221c20"/>
  <circle cx="706.700" cy="212.200" r=".8" fill="#221c20"/>
  <path d="M699.600 213.500 L699.200 218.400 L702.600 218.400 L702 213.500" stroke="#c08a72" stroke-width=".7" fill="#e4b49c"/>
  <path d="M698.700 218.800 L702.900 218.800" stroke="#a8705c" stroke-width=".9" fill="none"/>
  <!-- lips -->
  <path d="M696.200 223.400 Q698.500 221.800 700.600 222.700 Q702.700 221.800 705 223.400 Q703 226 700.600 226 Q698 226 696.200 223.400 Z" fill="#8e1c22"/>
  <path d="M696.800 223.600 L704.400 223.600" stroke="#5e1014" stroke-width=".5"/>
</g>
</svg>

</body>
</html>
